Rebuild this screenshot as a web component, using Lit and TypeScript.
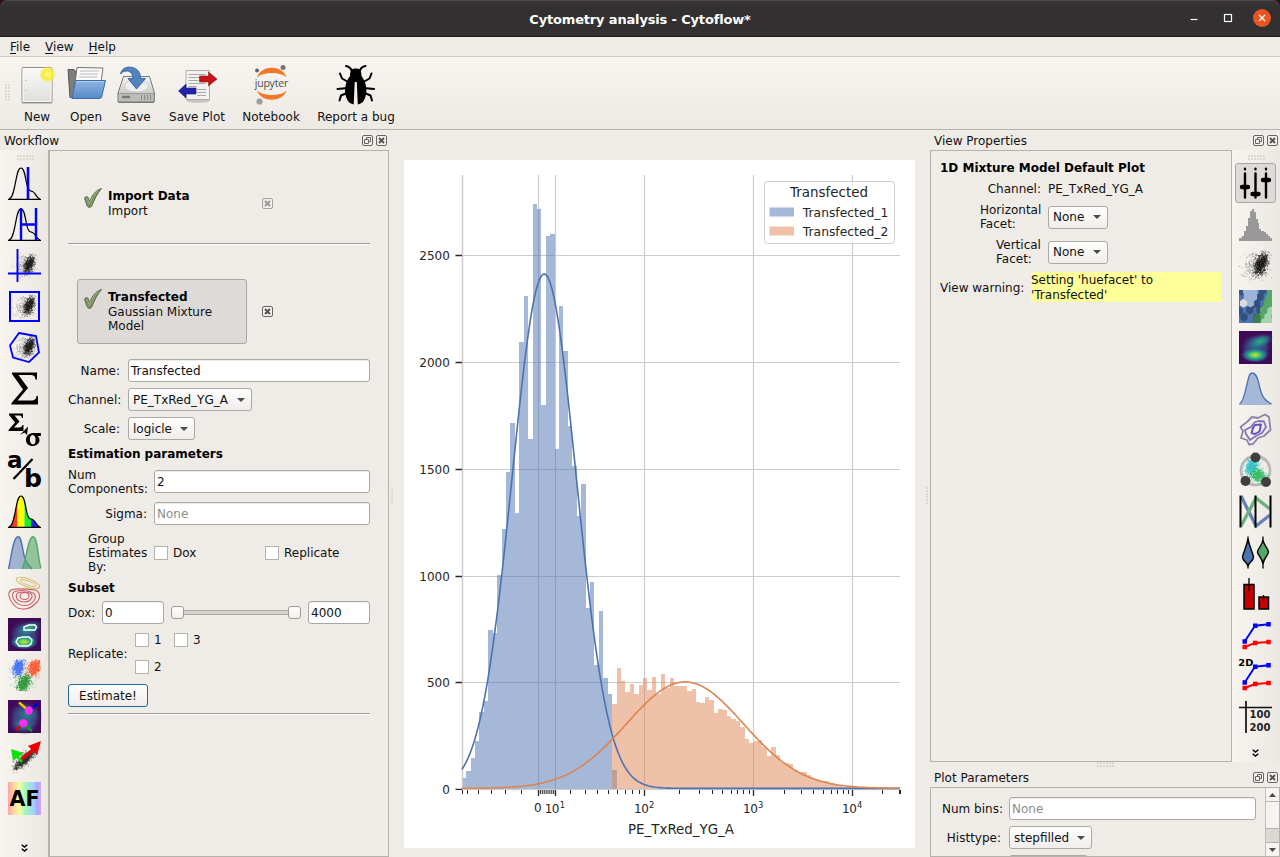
import { LitElement, html, svg, css } from "lit";
import { customElement } from "lit/decorators.js";

/* ---------- histogram data ---------- */
const BASE = 789;
const BIN0 = 461.8;
const BINW = 4.42;
const edge = (i: number) => Math.round(BIN0 + BINW * i);
const blueTops = [
  778, 771, 758, 741, 712, 701, 630, 633, 575, 529, 472, 423, 513, 342, 296, 439, 204, 209, 405, 236,
  234, 449, 306, 351, 426, 466, 516, 484, 608, 582, 665, 611, 678, 694, 770,
];
const orangeTops = [
  704, 668, 681, 692, 684, 694, 685, 678, 690, 677, 694, 674, 688, 678, 686, 686, 686, 691, 689, 702,
  703, 697, 700, 713, 709, 710, 716, 719, 721, 727, 739, 743, 741, 740, 747, 756, 747, 755, 762, 763,
  764, 770, 772, 772, 775, 778, 780, 782, 781, 783, 785, 786, 787, 787, 787, 788, 788,
];
const stepPath = (tops: number[], start: number) => {
  let d = `M${edge(start)} ${BASE}`;
  tops.forEach((t, i) => (d += `V${t}H${edge(start + i + 1)}`));
  return d + `V${BASE}Z`;
};
const gauss = (mu: number, s: number, h: number) => {
  let d = "";
  for (let x = 462; x <= 900; x += 2) {
    const y = BASE - 0.6 - h * Math.exp(-((x - mu) ** 2) / (2 * s * s));
    d += `${x === 462 ? "M" : "L"}${x} ${y.toFixed(2)}`;
  }
  return d;
};

/* ---------- deterministic scatter generator ---------- */
const rng = (seed: number) => () => {
  seed = (seed * 1664525 + 1013904223) % 4294967296;
  return seed / 4294967296;
};
const cloud = (cx: number, cy: number, sx: number, sy: number, rot: number, n: number, seed: number) => {
  const r = rng(seed);
  const g = () => r() + r() + r() + r() - 2;
  const c = Math.cos(rot), s = Math.sin(rot);
  let d = "";
  for (let i = 0; i < n; i++) {
    const a = g() * sx, b = g() * sy;
    const x = cx + a * c - b * s, y = cy + a * s + b * c;
    if (x < 0 || x > 32 || y < 0 || y > 32) continue;
    d += `M${x.toFixed(1)} ${y.toFixed(1)}h.9v.9h-.9z`;
  }
  return d;
};
const scatter = svg`
  <path d=${cloud(16, 17, 12, 11, -0.6, 260, 7)} fill="#222" opacity=".35"/>
  <path d=${cloud(21.5, 15, 6, 10, 0.35, 420, 11)} fill="#000" opacity=".5"/>
  <path d=${cloud(21.5, 14.5, 4, 8.5, 0.35, 420, 13)} fill="#000" opacity=".75"/>`;
const smallScatter = svg`<g transform="translate(3.5,3.5) scale(.8)">${scatter}</g>`;

const curve1 = "M1 32C5 31 6 22 8 13C9.500 5 10.500 1 13 1C16 1 17 8 18.500 16C20 24 22 24 24.500 24.500C28 25.500 27.500 31 32 32";
const heatDefs = svg`<defs>
  <radialGradient id="h1"><stop offset="0" stop-color="#cfe11c"/><stop offset=".25" stop-color="#7ad151"/><stop offset=".5" stop-color="#22a884"/><stop offset=".72" stop-color="#2a788e" stop-opacity=".85"/><stop offset="1" stop-color="#3b528b" stop-opacity="0"/></radialGradient>
  <radialGradient id="h2"><stop offset="0" stop-color="#2ab07f"/><stop offset=".5" stop-color="#26828e" stop-opacity=".85"/><stop offset="1" stop-color="#3b528b" stop-opacity="0"/></radialGradient>
  <radialGradient id="h3"><stop offset="0" stop-color="#31688e"/><stop offset=".6" stop-color="#3b528b" stop-opacity=".7"/><stop offset="1" stop-color="#440154" stop-opacity="0"/></radialGradient>
</defs>`;
const heat = svg`${heatDefs}<rect width="33" height="33" fill="#3d0a56"/>
  <ellipse cx="17" cy="17" rx="17" ry="16" fill="url(#h3)"/>
  <ellipse cx="21" cy="10.500" rx="14" ry="7" transform="rotate(-20 21 10.500)" fill="url(#h2)"/>
  <ellipse cx="16" cy="24" rx="14" ry="7.500" fill="url(#h1)"/>`;
const heatDim = svg`${heatDefs}<rect width="33" height="33" fill="#400a58"/>
  <ellipse cx="17" cy="17" rx="18" ry="18" fill="url(#h3)"/>
  <ellipse cx="20" cy="14" rx="13" ry="9" fill="url(#h2)" opacity=".4"/>
  <ellipse cx="15" cy="25" rx="14" ry="8" fill="url(#h2)" opacity=".6"/>`;
const lineSeries = svg`
  <path d="M5.700 29L16 25L29.500 24" fill="none" stroke="#f00" stroke-width="1.900"/>
  <path d="M5.700 23.500L16 7.700L29.500 6.300" fill="none" stroke="#00f" stroke-width="1.900"/>
  <path d="M3.500 26.800h4.500v4.500h-4.500zM14 22.800h4.500v4.500h-4.500zM27.300 21.800h4.500v4.500h-4.500z" fill="#f00"/>
  <path d="M3.500 21.200h4.500v4.500h-4.500zM14 5.500h4.500v4.500h-4.500zM27.300 4h4.500v4.500h-4.500z" fill="#00f"/>`;

const leftIcons = [
  svg`<path d=${curve1} fill="none" stroke="#000" stroke-width="1.200"/><path d="M0 32.300h33" stroke="#000" stroke-width="1.300"/><path d="M20 0v32" stroke="#00f" stroke-width="2.600"/>`,
  svg`<path d=${curve1} fill="none" stroke="#000" stroke-width="1.200"/><path d="M0 32.300h33" stroke="#000" stroke-width="1.300"/><path d="M13 0v32M28 0v32M13 16.500h15" stroke="#00f" stroke-width="2.400"/>`,
  svg`${smallScatter}<path d="M9.500 0v33M0 24.500h33" stroke="#00f" stroke-width="1.900"/>`,
  svg`${smallScatter}<rect x="2" y="2" width="29" height="29" fill="none" stroke="#00f" stroke-width="2"/>`,
  svg`${smallScatter}<path d="M11 2L28 5L31 21.500L21 31L5 26.500L2 14.500Z" fill="none" stroke="#00f" stroke-width="1.800"/>`,
  svg`<path d="M4 0.500H29V7.500H27.500C27 4 26 3 22 3H10.500L20 16L9.500 28.500H23C27 28.500 28 27 28.500 24H30V32.500H3.500V31L15 17.500L4 2Z"/>`,
  svg`<path d="M1 0.500H15V5H14C13.500 3 13 2.500 10.500 2.500H6.500L11.500 8.500L6 14.500H11C13.500 14.500 14 13.500 14.500 12H15.500V18H0.500V17L7 9.500L1 2Z"/><path d="M12 22L20 13.500L19 22L16.500 19.500Z"/><path d="M33 20v3h-3.500c1.300 1 2 2.600 2 4c0 3.500-3 6-7 6s-6.500-2.600-6.500-6c0-4.500 3.500-7 8-7zM24.700 22c-1.700 0-2.800 1.700-2.800 4.500s1.200 5 3 5s2.700-2 2.700-4.500s-1-5-2.900-5z" fill-rule="evenodd"/>`,
  svg`<text x="-.9" y="13.600" font-family="DejaVu Sans" font-weight="700" font-size="22.500" textLength="15.500" lengthAdjust="spacingAndGlyphs">a</text><text x="16" y="32.500" font-family="DejaVu Sans" font-weight="700" font-size="24" textLength="18" lengthAdjust="spacingAndGlyphs">b</text><path d="M5.500 25L24.500 5" stroke="#000" stroke-width="2.200"/>`,
  svg`<clipPath id="sp"><path d=${curve1 + "Z"}/></clipPath><g clip-path="url(#sp)"><path d="M0 0h9.500v33h-9.500z" fill="#fc3b1e"/><path d="M9.500 0h7v33h-7z" fill="#ff0"/><path d="M16.500 0h6.500v33h-6.500z" fill="#12ef2d"/><path d="M23 0h10v33h-10z" fill="#2a22ef"/></g><path d=${curve1} fill="none" stroke="#000" stroke-width="1.200"/><path d="M0 32.300h33" stroke="#000" stroke-width="1.300"/>`,
  svg`<path d="M.5 33C3 23 5 .8 10 .8C15 .8 14 21 19 27L24 33Z" fill="#a2b3d2" /><path d="M.5 33C3 23 5 .8 10 .8C15 .8 14 21 19 27L24 33" fill="none" stroke="#4c72b0" stroke-width="1.400"/><path d="M14 33C18 26 20 .8 25 .8C30 .8 30 25 33 32V33Z" fill="#55a868" opacity=".6"/><path d="M14 33C18 26 20 .8 25 .8C30 .8 30 25 33 32" fill="none" stroke="#55a868" stroke-width="1.400"/>`,
  svg`<g fill="none" stroke="#d3bb6b"><ellipse cx="20" cy="6" rx="12.500" ry="4" transform="rotate(20 20 6)"/><ellipse cx="20" cy="6" rx="8" ry="2" transform="rotate(20 20 6)"/></g><g fill="none" stroke="#cd5d63" stroke-width="1.100"><path d="M3 13C10 11 20 12 27 13C33 15 33 22 27 27C21 33 11 34 6 28C1 23-1 16 3 13Z"/><path d="M7 14.500C13 13 20 13 25 16C30 19 26 26 20 28C13 30 7 26 5 21C4 17 5 15 7 14.500Z"/><path d="M11 15.500C19 14 25 16 24 20C22 26 14 26 10 23C7 20 8 16 11 15.500Z"/><ellipse cx="16.500" cy="19" rx="4.500" ry="3.500"/></g>`,
  svg`${heat}<g fill="none" stroke="#fff" stroke-width="1.400"><path d="M16 9L21 7H27L28.500 9L27 12H20L16 12Z"/><path d="M10 20L15 19H21L24 22L23 26L20 28H11L8 24Z"/></g>`,
  svg`<path d=${cloud(10, 8, 4, 6.5, 0.3, 520, 3)} fill="#2962f5" opacity=".8"/><path d=${cloud(10, 9, 7, 9, 0.3, 150, 4)} fill="#2962f5" opacity=".4"/><path d=${cloud(26, 8, 4.5, 7, 0.5, 520, 5)} fill="#ff4314" opacity=".8"/><path d=${cloud(25, 9, 8, 9, 0.5, 150, 6)} fill="#ff4314" opacity=".4"/><path d=${cloud(15.5, 23.5, 4.5, 7, 0.5, 520, 9)} fill="#118a1f" opacity=".8"/><path d=${cloud(14.5, 24, 8, 9, 0.5, 150, 10)} fill="#118a1f" opacity=".4"/>`,
  svg`${heatDim}<g stroke-width="2.300"><path d="M11 2.500L21 11" stroke="#e7cd00"/><path d="M30 3L21 11" stroke="#0000e8"/><path d="M7.500 30.500L15 23.500" stroke="#e00000"/><path d="M24 31L15 23.500" stroke="#0b9a28"/></g><circle cx="20.800" cy="10.500" r="4" fill="#ff2cf5"/><circle cx="15.300" cy="23.300" r="4" fill="#ff2cf5"/>`,
  svg`<path d=${cloud(16, 18, 12, 5.5, -0.75, 400, 21)} fill="#111" opacity=".4"/><path d=${cloud(17, 17.5, 10, 3, -0.75, 520, 23)} fill="#000" opacity=".7"/><path d="M14 21L6 12" stroke="#0de00d" stroke-width="2.500"/><path d="M3 8L15.500 12L5 20Z" fill="#0de00d"/><path d="M14 18L27 7" stroke="#ec0000" stroke-width="3.200"/><path d="M33 0L29 14L20 5Z" fill="#ec0000"/>`,
  svg`<defs><linearGradient id="af"><stop offset="0" stop-color="#ffa3a6"/><stop offset=".2" stop-color="#ffdf9f"/><stop offset=".36" stop-color="#f0fca4"/><stop offset=".55" stop-color="#9ef6c0"/><stop offset=".75" stop-color="#a0d6fb"/><stop offset=".9" stop-color="#a9a5fa"/><stop offset="1" stop-color="#dca2f2"/></linearGradient></defs><rect width="33" height="33" fill="url(#af)"/><text x="1.500" y="24.300" font-family="DejaVu Sans" font-weight="700" font-size="21" textLength="30" lengthAdjust="spacingAndGlyphs">AF</text>`,
];

const hex = (x: number, y: number) => `M${x} ${y - 4.6}l3.600 2.300v4.600l-3.600 2.300l-3.600-2.300v-4.600z`;
const hexLayers: [string, [number, number][]][] = [
  ["#33507f", [[3, 1], [17.5, 13.5], [21, 7], [24, 0], [11, 20], [14, 14], [5, 27], [18, 27], [0, 21], [21, 20]]],
  ["#9fb2d8", [[8.5, 6.5], [11.5, 1], [14.5, 7], [11.5, 13], [7.5, 1], [15, 2]]],
  ["#d9dade", [[4.6, 13.2]]],
  ["#55a868", [[31.5, 1], [31.5, 7], [28.5, 13], [28.5, 19], [24.5, 20], [25, 26], [31.5, 13], [22, 27], [21.5, 32], [30, 8]]],
  ["#3c7d4a", [[18, 27.5], [17.5, 31]]],
  ["#a5d5b0", [[32, 21], [29, 27], [32, 32], [26, 32]]],
];

const rightIcons = [
  svg`<path d="M6 6.500v24M16.500 6.500v24M27 6.500v24" stroke="#000" stroke-width="2.400" stroke-linecap="round"/><path d="M3 20h6M13.500 27h6M24 13h6" stroke="#000" stroke-width="4.400" stroke-linecap="round"/><path d="M6 1.800v.4M16.500 1.800v.4M27 1.800v.4" stroke="#000" stroke-width="2.400" stroke-linecap="round"/>`,
  svg`<path d="M0 33V30H3V28H5V23H7V18H9V10H11V3H13V1H15V4H17V11H19V15H20V21H22V23H25V24H27V26H29V28H31V30H33V33Z" fill="#999"/>`,
  scatter,
  svg`<clipPath id="sq"><path d="M0 0h33v33h-33z"/></clipPath><g clip-path="url(#sq)"><path d="M0 0h33v33h-33z" fill="#4c72b0"/>${hexLayers.map(([f, pts]) => svg`<path d=${pts.map(([x, y]) => hex(x, y)).join("")} fill=${f}/>`)}</g>`,
  heat,
  svg`<path d="M.5 32C5 29 6 20 8 12C10 4 10.500 1 13.500 1S18 4 20 12C22 21 23 27 32.500 32V33H.5Z" fill="#a6b8d8"/><path d="M.5 32C5 29 6 20 8 12C10 4 10.500 1 13.500 1S18 4 20 12C22 21 23 27 32.500 32" fill="none" stroke="#4c72b0" stroke-width="1.300"/>`,
  svg`<g fill="none" stroke-linejoin="round" stroke-width="1.800"><path d="M13 4L19 5L26 1.500L30 4L31.500 17L25 23L19 25L14 31L10 31.500L8 27L2 25L4 18L1.500 14L8 9Z" stroke="#8a83a8"/><path d="M16 9L20 8L25 8.500L27 14L23 20L17 23L11 27L7 21L6 17L12 14Z" stroke="#8072b4"/><path d="M16 12L22 11.500L20.500 18.500L16 21L12.500 20L14 15Z" stroke="#6a4fc0" stroke-width="2"/></g>`,
  svg`<circle cx="16.500" cy="16.500" r="14.500" fill="none" stroke="#b9b9b9" stroke-width="2.800"/><path d=${cloud(12, 12, 4, 6.5, 0.4, 420, 31)} fill="#10b8c8" opacity=".75"/><path d=${cloud(13, 13, 8, 9, 0.4, 140, 32)} fill="#10b8c8" opacity=".4"/><path d=${cloud(18.5, 21, 6, 5, 0.4, 420, 33)} fill="#0fb050" opacity=".75"/><path d=${cloud(17, 20, 9, 8, 0.4, 160, 34)} fill="#0fb050" opacity=".4"/><circle cx="16.500" cy="3.500" r="5" fill="#3f3f3f"/><circle cx="6.500" cy="27" r="5" fill="#3f3f3f"/><circle cx="27" cy="28" r="5" fill="#3f3f3f"/>`,
  svg`<g stroke-width="3.400" opacity=".85"><path d="M2 1L17 31L31 20" stroke="#4c72b0" fill="none"/><path d="M2 31L17 3L31 14" stroke="#55a868" fill="none"/></g><path d="M1.500 .5v32M16.500 .5v32M31.500 .5v32" stroke="#000" stroke-width="2"/>`,
  svg`<path d="M9 .5v32M24 .5v32" stroke="#000" stroke-width="1.300"/><path d="M9 3C10.500 11 14 17 14.500 21C14.500 25 10 26 9 30C8 26 3.500 25 3.500 21C4 17 7.500 11 9 3Z" fill="#4c72b0" stroke="#000" stroke-width="1.400"/><path d="M24 4C25 10 29.500 13 29.500 16C29.500 19 25 21 24 28C23 21 18.500 19 18.500 16C18.500 13 23 10 24 4Z" fill="#55a868" stroke="#000" stroke-width="1.400"/>`,
  svg`<path d="M5 7.500h10v24.500h-10zM20 20h9.500v12h-9.500z" fill="#c40000" stroke="#000" stroke-width="1.500"/><path d="M10 1v13M24.500 18v5.500" stroke="#000" stroke-width="1.300"/>`,
  lineSeries,
  svg`${lineSeries}<text x="-.7" y="7.200" font-family="DejaVu Sans" font-weight="700" font-size="9.500" textLength="15" lengthAdjust="spacingAndGlyphs">2D</text>`,
  svg`<path d="M0 7.500h33M7 1v32" stroke="#111" stroke-width="1.700"/><text x="10.500" y="18" font-family="DejaVu Sans" font-weight="700" font-size="10.500" textLength="21" lengthAdjust="spacingAndGlyphs" fill="#222">100</text><text x="10.500" y="30.500" font-family="DejaVu Sans" font-weight="700" font-size="10.500" textLength="21" lengthAdjust="spacingAndGlyphs" fill="#222">200</text>`,
];

const toolDefs = svg`<defs>
  <linearGradient id="pg" x2="0" y2="1"><stop offset="0" stop-color="#fafafa"/><stop offset="1" stop-color="#dededc"/></linearGradient>
  <linearGradient id="bl" x2="0" y2="1"><stop offset="0" stop-color="#8fb6e2"/><stop offset="1" stop-color="#5588c7"/></linearGradient>
  <linearGradient id="dk" x2="0" y2="1"><stop offset="0" stop-color="#f4f4f3"/><stop offset="1" stop-color="#b5b6b3"/></linearGradient>
  <radialGradient id="sun"><stop offset="0" stop-color="#fffff0"/><stop offset=".25" stop-color="#fff64a"/><stop offset=".6" stop-color="#f6ea2c" stop-opacity=".85"/><stop offset="1" stop-color="#f9f06b" stop-opacity="0"/></radialGradient>
</defs>`;
const tools = [
  { label: "New", w: 50, icon: svg`<rect x="5" y="3.500" width="30" height="35" rx="1" fill="url(#pg)" stroke="#8c8c8a"/><path d="M6 37.500v-33h28v33z" fill="none" stroke="#fff" opacity=".8"/><path d="M9 16v1M9 26v1" stroke="#aaa"/><path d="M4.500 39.500h31" stroke="#c9c6c2"/><circle cx="30.500" cy="10.500" r="9" fill="url(#sun)"/>` },
  { label: "Open", w: 48, icon: svg`<path d="M2 5.500h6l2 2v26h-6z" fill="#7d7e7b" stroke="#555"/><path d="M11 3.500L37 4L33.500 29H8z" fill="#fbfbfb" stroke="#747474"/><path d="M14 7h19M13.500 10h18.500M13 13h18" stroke="#bbb"/><path d="M5 34l5-18h5l3 2" fill="#8f908d"/><path d="M9.500 16.500H39.500L35.500 33.500Q35 34.500 33.500 34.500H6Z" fill="url(#bl)" stroke="#3b6cad"/><path d="M10.500 17.600h27.500" stroke="#b4d0ef"/>` },
  { label: "Save", w: 52, icon: svg`<path d="M7.500 12.500H33.500L38.500 29V37.500Q38.500 38.500 37 38.500H3Q2 38.500 2 37.500V29Z" fill="url(#dk)" stroke="#777"/><ellipse cx="20.500" cy="22" rx="12" ry="6" fill="#eee" stroke="#d0d0cf"/><path d="M2.500 29.500h35.500v8h-35.500z" fill="#bcbdba" stroke="#999"/><path d="M6 33h8" stroke="#777" stroke-width="2.500"/><path d="M25.500 31v5M28.500 31v5M31.500 31v5M34.500 31v5" stroke="#8a8a88"/><path d="M4.500 10C6 3 13 2 18 4C23 6 24.500 10 24.500 14.500H29.500L20.500 25L12 14.500H17C17 10 14 6.500 10 7C7.500 7.300 5.500 8.500 4.500 10Z" fill="#5283c0" stroke="#33609f" stroke-width=".9"/>` },
  { label: "Save Plot", w: 70, icon: svg`<ellipse cx="21" cy="36.500" rx="12" ry="2.500" fill="#c9c6c2"/><path d="M9 6.500h23.500v29h-23.500z" fill="#f2f2f1" stroke="#adadab"/><path d="M11.500 10.500h17M11.500 13.500h12M11.500 16.500h10M11.500 19.500h17M11.500 22.500h8M20 25.500h9M20 28.500h9M20 31.500h9" stroke="#a8a8a6"/><path d="M22.500 12h9v-4l8.500 7l-8.500 7v-4h-9z" fill="#c81414" stroke="#8d1d1d" stroke-width=".6"/><path d="M19 24h-10v-4l-7.500 7l7.500 7v-4h10z" fill="#2222aa" stroke="#171774" stroke-width=".6"/>` },
  { label: "Notebook", w: 78, icon: svg`<path d="M6 13.500C10 .6 31.500 .6 35.500 13.500C30 7.500 12 7.500 6 13.500Z" fill="#f37726"/><path d="M6 26.500C10 38.800 31.500 38.800 35.500 26.500C30 32.500 12 32.500 6 26.500Z" fill="#f37726"/><circle cx="6" cy="6.500" r="1.900" fill="#616262"/><circle cx="32" cy="3.500" r="2.500" fill="#767677"/><circle cx="8.500" cy="37.500" r="3.100" fill="#9e9e9e"/><text x="3.700" y="22.600" font-family="Open Sans" font-size="10.500" font-weight="500" fill="#4e4e4e" textLength="33.500">jupyter</text>` },
  { label: "Report a bug", w: 92, icon: svg`<g transform="translate(-1,0)"><g fill="none" stroke="#000" stroke-width="2" stroke-linecap="round" stroke-linejoin="round"><path d="M17 7C16 3.500 14 2 11 1.500M24.500 7C25.500 3.500 27.500 2 30.500 1.500M14 18L7 14L5 9M27.500 18L34.500 14L36.500 9M13 23.500L2.500 24.500M28.500 23.500L39 24.500M13 28L6 31L4.500 36M28.500 28L35.500 31L37 36" transform="translate(0,.5)"/></g><path d="M15 12C15 6 17 4.500 20.700 4.500S26.500 6 26.500 12L28.500 15C31.500 20 32.500 28 30 34C29 37.500 27 39.500 22.800 40.500L21.800 18H19.700L18.700 40.500C14.500 39.500 12.500 37.500 11.500 34C9 28 10 20 13 15Z"/></g>` },
];

const closeIcon = html`<svg class="dockbtn" width="11" height="11" viewBox="0 0 11 11"><rect x=".5" y=".5" width="10" height="10" rx="1.500" fill="#f3f1ee" stroke="#686663"/><path d="M3 3L8 8M8 3L3 8" stroke="#555350" stroke-width="1.900"/></svg>`;
const floatIcon = html`<svg class="dockbtn" width="11" height="11" viewBox="0 0 11 11"><rect x=".5" y=".5" width="10" height="10" rx="1.500" fill="#f3f1ee" stroke="#686663"/><path d="M4.500 4V2.500H8.500V6.500H7M2.500 4.500H6.500V8.500H2.500Z" fill="none" stroke="#686663"/></svg>`;
const check = html`<svg class="check" width="20" height="22" viewBox="0 0 20 22"><path d="M1.500 11C3 9 5 9 5.500 12L6.500 14.500C9 8 13 3 18.500 1.500C14.500 6 11.500 12 8.500 19.500C6.500 21 5 20.500 4 18.500Z" fill="#7d9664" stroke="#5b6c50"/><path d="M3 11.500C5 11 5 15 6.500 16.500C9 10 12 5.500 15.500 3.500" fill="none" stroke="#a3b78f" stroke-width=".8"/></svg>`;
const chevrons = html`<svg width="7" height="8" viewBox="0 0 7 8"><path d="M.7 .7L3.500 3L6.300 .7M.7 4.700L3.500 7L6.300 4.700" fill="none" stroke="#000" stroke-width="1.400"/></svg>`;

const yTicks: [number, string][] = [[255.5, "2500"], [362.5, "2000"], [469.5, "1500"], [576.5, "1000"], [682.5, "500"], [789.3, "0"]];
const xGrid = [462.5, 538.5, 555.5, 644.5, 753.5, 852.5];
const xMinor = [
  467.5, 478.5, 491.5, 505.5, 521.5, 540.4, 542.3, 544.2, 546.1, 548, 549.9, 551.8, 553.7, 570.5, 585.5, 597.5, 608.5, 617.5, 625.5, 632.5, 639.5,
  679.5, 699.5, 712.5, 722.5, 731.5, 737.5, 743.5, 749.5, 784.5, 801.5, 813.5, 823.5, 831.5, 837.5, 843.5, 848.5, 882.5, 899.5, 900.5,
];
const xExp: [number, string][] = [[544.7, "1"], [634, "2"], [743, "3"], [842, "4"]];

@customElement("cf-plot")
export class CfPlot extends LitElement {
  static styles = css`
    :host { display: block; background: #fff; }
    svg { display: block; font-family: "DejaVu Sans", sans-serif; fill: #262626; }
    .grid { stroke: #ccc; fill: none; }
    .tick { stroke: #262626; fill: none; }
  `;
  render() {
    return html`<svg width="511" height="688" viewBox="404 160 511 688" font-size="12">
      <path class="grid" stroke-width="1.200" d=${xGrid.map((x) => `M${x} 175V789`).join("")}></path>
      <path class="grid" stroke-width="1.200" d=${yTicks.map(([y]) => `M462 ${y}H900`).join("")}></path>
      <path d=${stepPath(blueTops, 0)} fill="#4c72b0" fill-opacity=".5"></path>
      <path d=${stepPath(orangeTops, 34)} fill="#dd8452" fill-opacity=".5"></path>
      <path d="M462.500 175V789.300H900" class="grid" stroke-width="1.300"></path>
      <path d=${gauss(544.2, 32, 514.5)} fill="none" stroke="#4c72b0" stroke-width="1.600"></path>
      <path d=${gauss(685, 58.5, 106.5)} fill="none" stroke="#dd8452" stroke-width="1.600"></path>
      <path class="tick" stroke-width="1.300" d=${yTicks.map(([y]) => `M455.500 ${y}H462`).join("")}></path>
      <path class="tick" stroke-width="1.300" d=${xGrid.slice(1).map((x) => `M${x} 790V796`).join("")}></path>
      <path class="tick" d=${[462.5, ...xMinor].map((x) => `M${x} 790V794`).join("")}></path>
      ${yTicks.map(([y, t]) => svg`<text x="449.800" y=${y + 4.4} text-anchor="end">${t}</text>`)}
      <text x="537.700" y="811.500" text-anchor="middle">0</text>
      ${xExp.map(([x, e]) => svg`<text x=${x} y="812.500" textLength="14.800">10</text><text x=${x + 15} y="807.500" font-size="8.400">${e}</text>`)}
      <text x="628" y="834" font-size="13.200" textLength="106" lengthAdjust="spacingAndGlyphs">PE_TxRed_YG_A</text>
      <rect x="764.500" y="181.500" width="130" height="62" rx="3" fill="#fff" fill-opacity=".8" stroke="#ccc"></rect>
      <text x="790" y="196.500" font-size="13.200" textLength="78" lengthAdjust="spacingAndGlyphs">Transfected</text>
      <rect x="769.500" y="207.500" width="24.500" height="9" fill="#4c72b0" fill-opacity=".5"></rect>
      <rect x="769.500" y="226.500" width="24.500" height="9" fill="#dd8452" fill-opacity=".5"></rect>
      <text x="802.800" y="217" textLength="85.500" lengthAdjust="spacingAndGlyphs">Transfected_1</text>
      <text x="802.800" y="236" textLength="85.500" lengthAdjust="spacingAndGlyphs">Transfected_2</text>
    </svg>`;
  }
}

@customElement("app-root")
export class AppRoot extends LitElement {
  static styles = css`
    :host { display: block; width: 1280px; height: 857px; overflow: hidden; font: 12px/14px "DejaVu Sans", sans-serif; color: #111; background: #efebe7; }
    * { box-sizing: border-box; }
    svg { display: block; flex: none; overflow: visible; }
    b { display: block; color: #000; }
    .window { display: flex; flex-direction: column; height: 857px; }
    .corners { background: #300a24; }
    .titlebar { height: 37px; display: grid; grid-template-columns: 130px 1fr 130px; align-items: center; background: linear-gradient(#383636, #323031 20%); border-top: 1px solid #4c4a4a; border-bottom: 1px solid #1f1d1e; border-radius: 7px 7px 0 0; color: #fff; }
    .wtitle { text-align: center; font-weight: 700; font-size: 13px; letter-spacing: -.16px; padding-top: 2px; }
    .menubar { height: 20px; display: flex; gap: 15px; padding: 3px 0 0 10px; border-bottom: 1px solid #cfcbc7; }
    .menubar u { text-underline-offset: 2px; }
    .toolbar { height: 73px; display: flex; padding-left: 5px; background: linear-gradient(#f8f5f1, #edeae5); border-bottom: 1px solid #b5b2af; }
    .tool { display: flex; flex-direction: column; align-items: center; padding-top: 7px; }
    .tool span { margin-top: 4px; white-space: nowrap; }
    .grip-v { width: 5px; height: 17px; background: radial-gradient(circle at 1px 1px, #c4c0bc .6px, transparent .8px) 0 0/3px 3px; }
    .toolbar .grip-v { margin: 27px 2px 0 0; }
    .grip-h { width: 17px; height: 5px; background: radial-gradient(circle at 1px 1px, #c4c0bc .6px, transparent .8px) 0 0/3px 3px; }
    .body { height: 727px; display: grid; grid-template-columns: 389px 541px 350px; }
    .dock { display: flex; flex-direction: column; min-height: 0; }
    .docktitle { height: 20px; display: flex; align-items: center; padding: 1px 2px 0 4px; gap: 3px; flex: none; }
    .docktitle span { flex: 1; }
    .dockrow { display: flex; flex: 1; min-height: 0; }
    .strip { width: 48px; display: flex; flex-direction: column; align-items: flex-start; background: linear-gradient(90deg, #f8f5f1, #ebe8e3); padding-left: 8px; }
    .strip.rs { padding-left: 7px; }
    .strip .grip-h { margin: 5px 0 7px 9px; flex: none; }
    .strip .ic { height: 41px; flex: none; }
    .strip .active { width: 41px; height: 40px; margin: -4px 0 5px -4px; padding: 3px; border: 1px solid #aaa6a2; border-radius: 3px; background: #dedad7; }
    .more { margin: auto 0 5px 13px; }
    .frame { border: 1px solid #b5b1ad; flex: 1; min-width: 0; }
    .left { border-left-width: 2px; padding: 0 18px; display: flex; flex-direction: column; }
    .op { width: 170px; height: 66px; display: flex; gap: 5px; padding: 9px 0 0 5px; border: 1px solid transparent; border-radius: 3px; }
    .op.sel { background: #dedad7; border-color: #aaa6a2; height: 65px; }
    .op p, .op b { margin: 0; }
    .op b { height: 15px; }
    .op .txt { padding-top: 1px; }
    .check { margin-top: -1px; }
    .oprow { display: flex; align-items: center; gap: 15px; padding-left: 9px; }
    .r1 { margin-top: 27px; }
    .hr { height: 2px; border-top: 1px solid #9c9996; background: #fff; flex: none; }
    .h1 { margin: -1px 0 34px; }
    .dim { opacity: .55; margin-bottom: 16px; }
    .row { display: flex; align-items: center; flex: none; }
    .row > label { text-align: right; margin-right: 8px; flex: none; }
    .in, .combo { height: 23px; border: 1px solid #aca8a4; border-radius: 3px; background: #fff; padding: 0 3px 0 2px; line-height: 22px; flex: 1; box-shadow: inset 0 1px 0 #ececec; white-space: nowrap; }
    .ph { color: #8b8b8b; }
    .combo { flex: none; display: flex; justify-content: space-between; align-items: center; padding: 0 6px 0 4px; background: linear-gradient(#fefefe, #f0eeeb); box-shadow: none; line-height: 20px; }
    .combo::after { content: ""; border: 4.500px solid transparent; border-top: 4.500px solid #4d4b49; border-bottom: 0; }
    .cb { width: 14px; height: 14px; border: 1px solid #b5b1ad; background: #fff; margin-right: 5px; flex: none; }
    .lt { text-align: left !important; }
    .slider { width: 130px; height: 13px; margin: 0 7px; display: flex; align-items: center; flex: none; }
    .slider i { width: 13px; height: 13px; border: 1px solid #9f9b97; border-radius: 3px; background: linear-gradient(#fff, #f1efec); }
    .slider em { flex: 1; height: 5px; border: solid #aaa6a2; border-width: 1px 0; background: #d8d4d0; }
    .btn { width: 80px; height: 23px; border: 1px solid #1f6b98; border-radius: 3px; background: linear-gradient(#fefefe, #efedea); text-align: center; line-height: 22px; flex: none; }
    .mid { display: grid; grid-template-columns: 15px 511px 15px; align-items: start; padding-top: 30px; }
    .mid .grip-v { margin: 327px 0 0 2px; width: 3px; }
    .mid .grip-v:last-child { margin-left: 11px; }
    .right { padding: 10px 9px 0 9px; display: flex; flex-direction: column; }
    .warn { background: #ffff99; width: 190px; height: 30px; line-height: 15px; padding-top: 1px; }
    .wl { padding-top: 1px; }
    .split { height: 5px; display: flex; justify-content: center; flex: none; overflow: hidden; }
    .params { border: 1px solid #b5b1ad; height: 70px; display: grid; grid-template: 68px / 1fr 14px; overflow: hidden; }
    .pform { padding: 9px 9px 0 11px; display: flex; flex-direction: column; gap: 6px; overflow: hidden; }
    .sb { border-left: 1px solid #c2beba; display: flex; flex-direction: column; background: #dcd8d4; }
    .sb div { height: 14px; display: flex; align-items: center; justify-content: center; background: #f6f4f1; border-bottom: 1px solid #b5b1ad; flex: none; }
    .sb .thumb { height: 27px; }
    .sb .dn { margin-top: auto; border-top: 1px solid #b5b1ad; border-bottom: 0; }
  `;
  render() {
    const strip = (icons: unknown[], active: number) => html`<div class="strip ${active === 0 ? "rs" : ""}"><div class="grip-h"></div>
      ${icons.map((ic, i) => html`<div class="ic ${i === active ? "active" : ""}"><svg width="33" height="33" viewBox="0 0 33 33">${ic}</svg></div>`)}
      <div class="more">${chevrons}</div></div>`;
    const gap = (h: number) => html`<div style="height:${h}px;flex:none"></div>`;
    const label = (w: number, t: unknown) => html`<label style="width:${w}px">${t}</label>`;
    const combo = (w: number, t: string) => html`<div class="combo" style="width:${w}px">${t}</div>`;
    return html`<div class="window">
      <div class="corners"><div class="titlebar"><span></span><span class="wtitle">Cytometry analysis - Cytoflow*</span>
        <svg width="130" height="35" viewBox="1150 1 130 35"><path d="M1190.500 19.500h7" stroke="#fff" stroke-width="1.200"/><rect x="1224.500" y="14.500" width="7" height="7" fill="none" stroke="#fff" stroke-width="1.200"/><circle cx="1262" cy="18" r="9" fill="#e95420"/><path d="M1259 15l6 6M1265 15l-6 6" stroke="#fff" stroke-width="1.300"/></svg>
      </div></div>
      <div class="menubar"><span><u>F</u>ile</span><span><u>V</u>iew</span><span><u>H</u>elp</span></div>
      <div class="toolbar"><div class="grip-v"></div>
        ${tools.map((t) => html`<div class="tool" style="width:${t.w}px"><svg width="41" height="42" viewBox="0 0 41 42">${toolDefs}${t.icon}</svg><span>${t.label}</span></div>`)}
      </div>
      <div class="body">
        <div class="dock">
          <div class="docktitle"><span>Workflow</span>${floatIcon}${closeIcon}</div>
          <div class="dockrow">${strip(leftIcons, -1)}
            <div class="frame left">
              <div class="oprow r1"><div class="op">${check}<div class="txt"><b>Import Data</b><p>Import</p></div></div><span class="dim">${closeIcon}</span></div>
              <div class="hr h1"></div>
              <div class="oprow"><div class="op sel">${check}<div class="txt"><b>Transfected</b><p>Gaussian Mixture<br>Model</p></div></div>${closeIcon}</div>
              ${gap(15)}
              <div class="row">${label(52, "Name:")}<div class="in">Transfected</div></div>
              ${gap(6)}
              <div class="row">${label(52, "Channel:")}${combo(124, "PE_TxRed_YG_A")}</div>
              ${gap(6)}
              <div class="row">${label(52, "Scale:")}${combo(67, "logicle")}</div>
              ${gap(7)}<b>Estimation parameters</b>${gap(7)}
              <div class="row"><label class="lt" style="width:79px;margin-right:7px">Num<br>Components:</label><div class="in" style="margin-bottom:2px">2</div></div>
              ${gap(6)}
              <div class="row"><label style="width:79px;margin-right:7px">Sigma:</label><div class="in ph">None</div></div>
              ${gap(7)}
              <div class="row"><label class="lt" style="width:66px;margin:0 0 0 20px">Group<br>Estimates<br>By:</label><i class="cb"></i><span style="width:92px">Dox</span><i class="cb"></i>Replicate</div>
              ${gap(7)}<b>Subset</b>${gap(6)}
              <div class="row"><label style="width:34px;margin:0" class="lt">Dox:</label><div class="in">0</div><div class="slider"><i></i><em></em><i></i></div><div class="in">4000</div></div>
              ${gap(9)}
              <div class="row"><label style="width:67px;margin:0" class="lt wl">Replicate:</label><div>
                <div class="row"><i class="cb"></i><span style="width:20px">1</span><i class="cb"></i>3</div>${gap(13)}
                <div class="row"><i class="cb"></i>2</div></div></div>
              ${gap(10)}
              <div class="btn">Estimate!</div>
              ${gap(6)}<div class="hr"></div>
            </div>
          </div>
        </div>
        <div class="mid"><div class="grip-v"></div><cf-plot></cf-plot><div class="grip-v"></div></div>
        <div class="dock">
          <div class="docktitle"><span>View Properties</span>${floatIcon}${closeIcon}</div>
          <div class="dockrow" style="height:612px;flex:none">
            <div class="frame right">
              <b>1D Mixture Model Default Plot</b>${gap(7)}
              <div class="row">${label(101, "Channel:")}<span style="margin-left:-1px">PE_TxRed_YG_A</span></div>${gap(7)}
              <div class="row"><label class="lt" style="width:61px;margin:0 7px 0 40px">Horizontal<br>Facet:</label>${combo(60, "None")}</div>${gap(7)}
              <div class="row"><label class="lt" style="width:45px;margin:0 7px 0 56px">Vertical<br>Facet:</label>${combo(60, "None")}</div>${gap(6)}
              <div class="row"><label class="lt wl" style="width:91px;margin:0">View warning:</label><div class="warn">Setting 'huefacet' to<br>'Transfected'</div></div>
            </div>
            ${strip(rightIcons, 0)}
          </div>
          <div class="split"><div class="grip-h"></div></div>
          <div class="docktitle"><span>Plot Parameters</span>${floatIcon}${closeIcon}</div>
          <div class="params"><div class="pform">
              <div class="row"><label class="lt" style="width:67px;margin:0">Num bins:</label><div class="in ph">None</div></div>
              <div class="row"><label style="width:59px">Histtype:</label>${combo(83, "stepfilled")}</div>
              <div class="row"><label style="width:59px"></label>${combo(79, "")}</div>
            </div>
            <div class="sb"><div><svg width="7" height="4"><path d="M3.500 0L7 4H0z" fill="#4d4b49"/></svg></div><div class="thumb"></div><div class="dn"><svg width="7" height="4"><path d="M0 0H7L3.500 4z" fill="#4d4b49"/></svg></div></div>
          </div>
        </div>
      </div>
    </div>`;
  }
}
